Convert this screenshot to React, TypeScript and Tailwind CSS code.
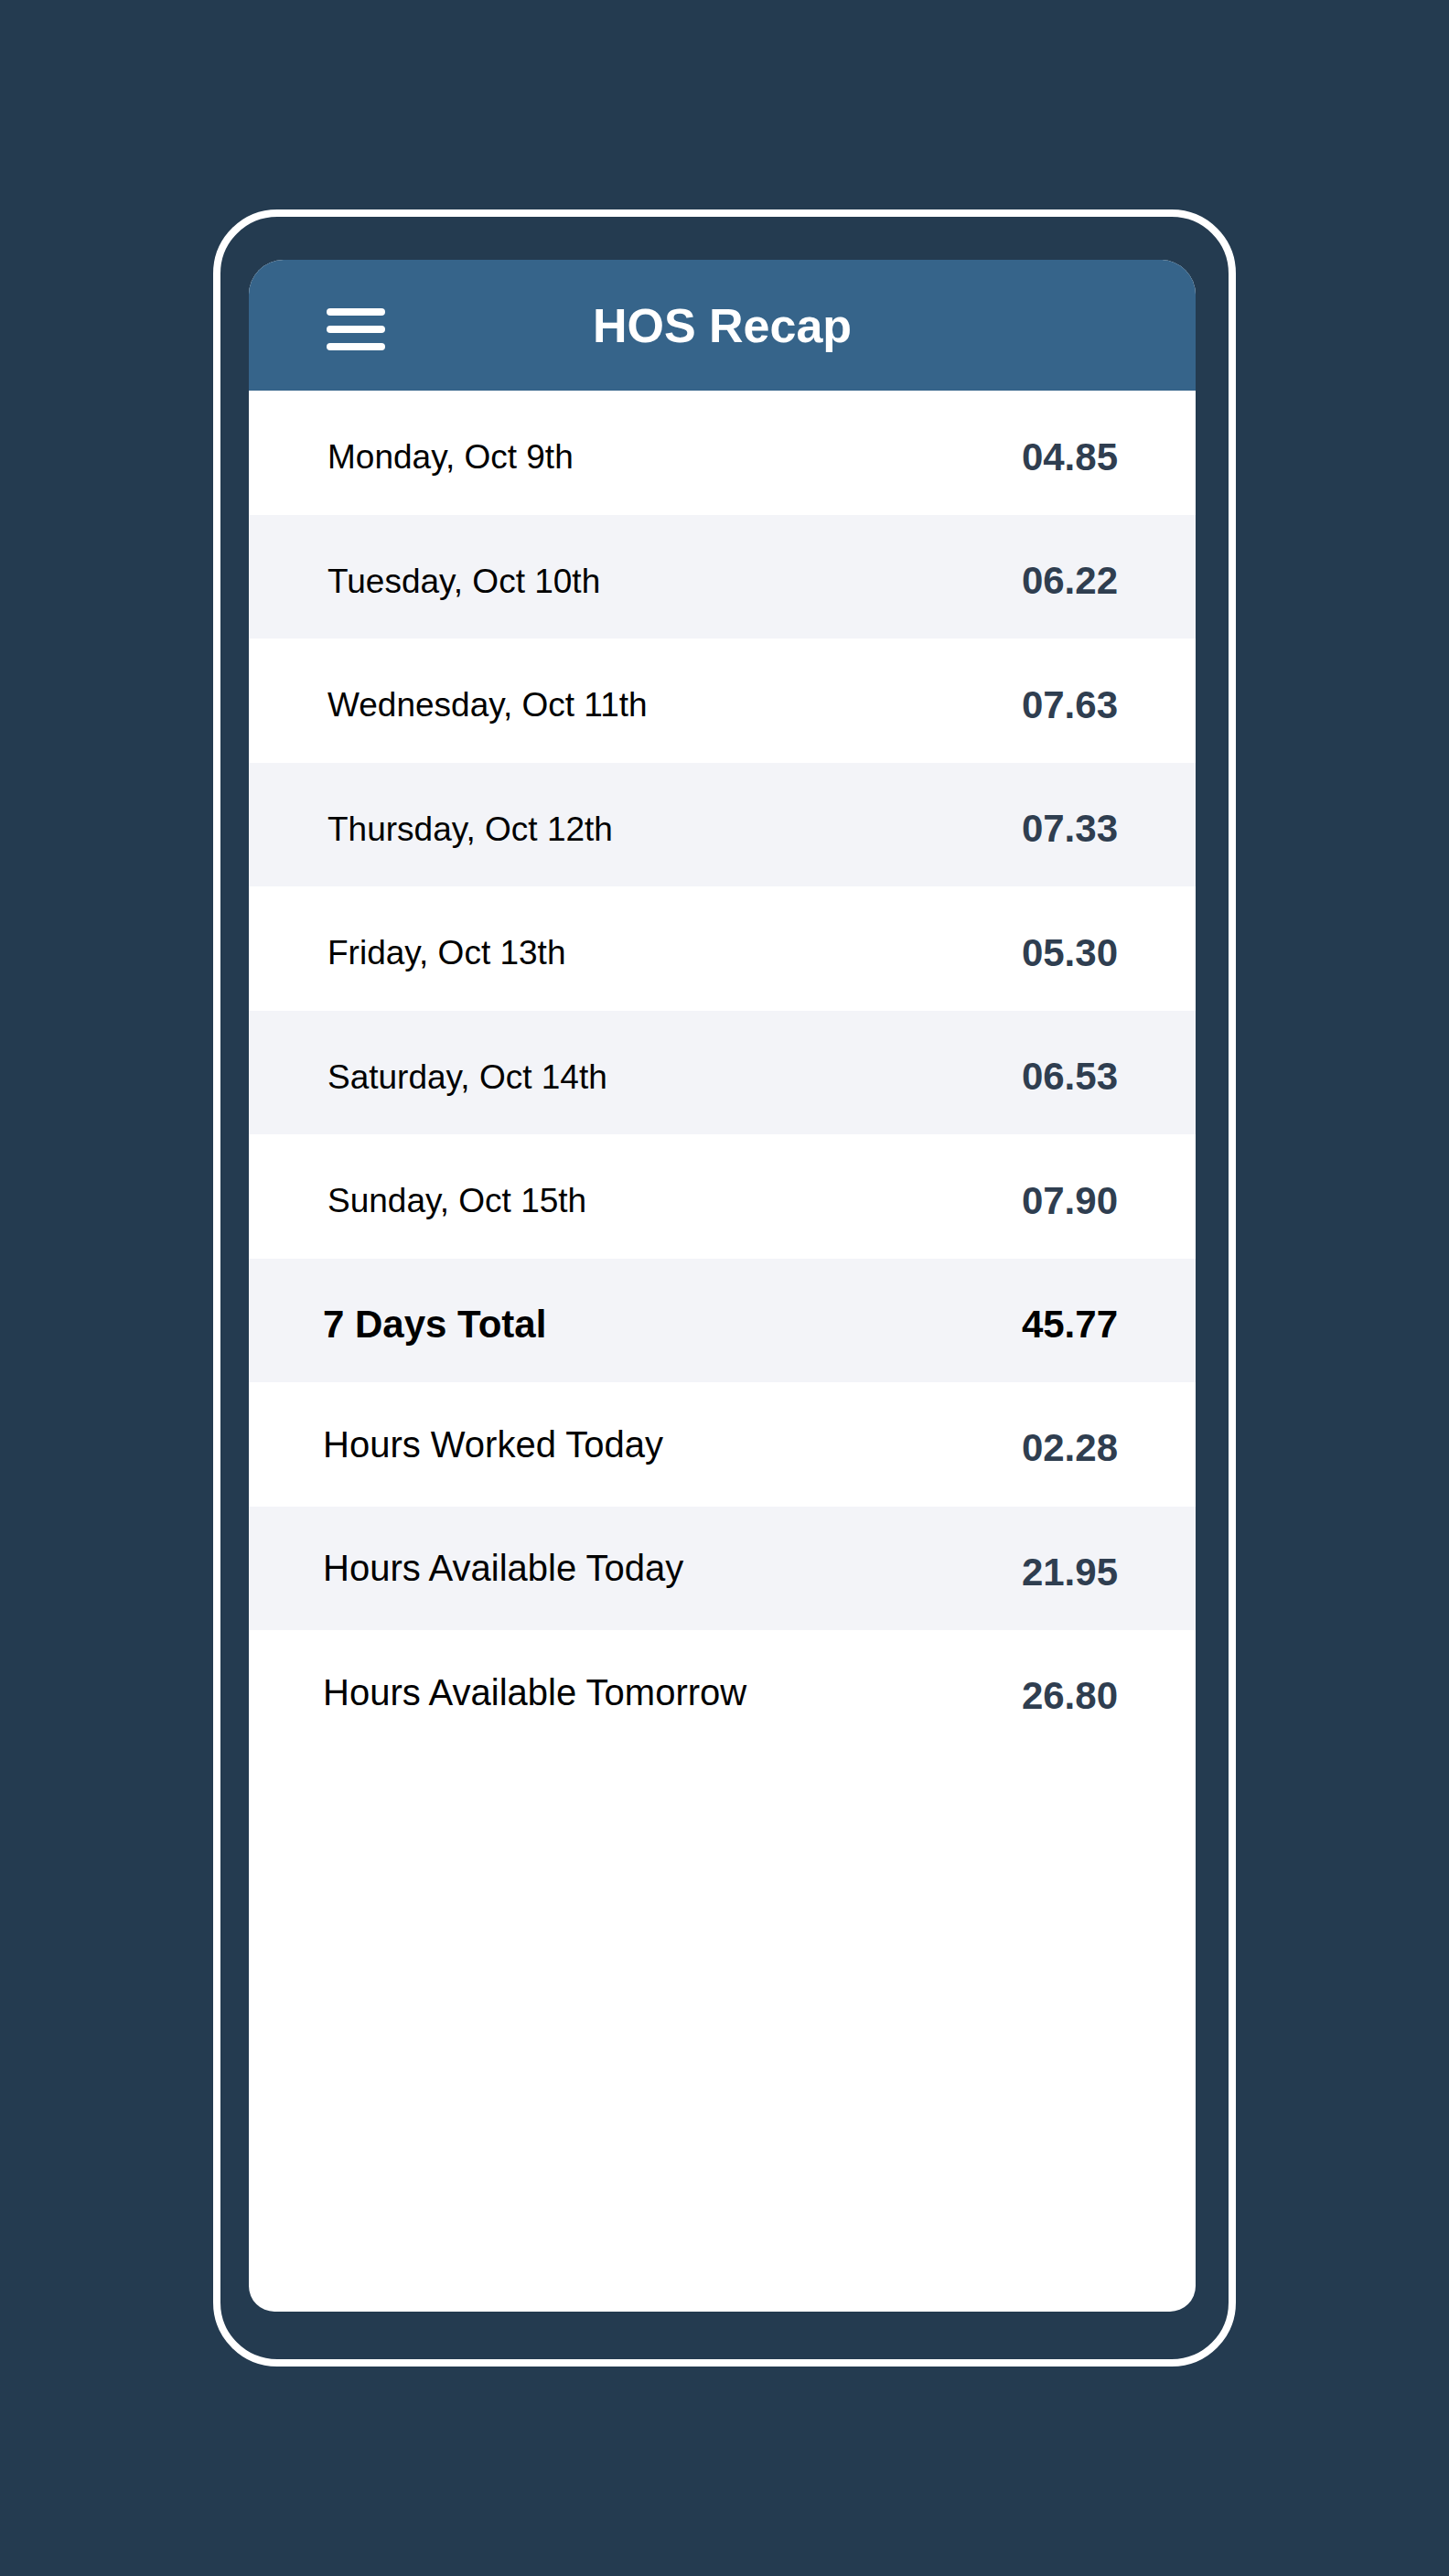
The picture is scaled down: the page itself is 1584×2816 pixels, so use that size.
const rows = [
  { label: "Monday, Oct 9th", value: "04.85", kind: "day" },
  { label: "Tuesday, Oct 10th", value: "06.22", kind: "day" },
  { label: "Wednesday, Oct 11th", value: "07.63", kind: "day" },
  { label: "Thursday, Oct 12th", value: "07.33", kind: "day" },
  { label: "Friday, Oct 13th", value: "05.30", kind: "day" },
  { label: "Saturday, Oct 14th", value: "06.53", kind: "day" },
  { label: "Sunday, Oct 15th", value: "07.90", kind: "day" },
  { label: "7 Days Total", value: "45.77", kind: "total" },
  { label: "Hours Worked Today", value: "02.28", kind: "hours" },
  { label: "Hours Available Today", value: "21.95", kind: "hours" },
  { label: "Hours Available Tomorrow", value: "26.80", kind: "hours" },
];

function Row({ label, value, kind, index }: { label: string; value: string; kind: string; index: number }) {
  const shaded = index % 2 === 1;
  return (
    <div
      className={`h-[135.5px] flex items-center justify-between pr-[85px] ${
        shaded ? "bg-[#f3f4f8]" : "bg-white"
      } ${kind === "day" ? "pl-[86px]" : "pl-[81px]"}`}
    >
      {kind === "total" ? (
        <span className="pt-[10px] text-[42px] leading-none font-bold text-black">{label}</span>
      ) : kind === "day" ? (
        <span className="pt-[10px] text-[37px] leading-none text-black">{label}</span>
      ) : (
        <span className="text-[40px] leading-none text-black">{label}</span>
      )}
      <span
        className={`text-[42px] leading-none font-bold ${
          kind === "total" ? "pt-[10px] text-black" : kind === "day" ? "pt-[10px] text-[#2f3e50]" : "pt-[9px] text-[#2f3e50]"
        }`}
      >
        {value}
      </span>
    </div>
  );
}

export default function App() {
  return (
    <div
      className="min-h-screen bg-[#243b50] flex justify-center pt-[229px]"
      style={{ fontFamily: '"Liberation Sans", Arial, sans-serif' }}
    >
      {/* Phone frame */}
      <div className="w-[1118px] h-[2358px] border-[8px] border-white rounded-[70px] pl-[31px] pr-[36px] pt-[47px] pb-[52px] flex">
        <div className="flex-1 bg-white rounded-t-[38px] rounded-b-[28px] overflow-hidden flex flex-col">
          {/* Header */}
          <div className="h-[143px] shrink-0 bg-[#36648a] grid grid-cols-[1fr_auto_1fr] items-center px-[85px]">
            <div className="mt-[8px] flex flex-col gap-[11px] w-[64px]">
              <span className="h-[8px] rounded-full bg-white" />
              <span className="h-[8px] rounded-full bg-white" />
              <span className="h-[8px] rounded-full bg-white" />
            </div>
            <h1 className="text-[52px] leading-none font-bold text-white">HOS Recap</h1>
            <div />
          </div>

          {/* Recap list */}
          <div className="flex flex-col">
            {rows.map((r, i) => (
              <Row key={r.label} label={r.label} value={r.value} kind={r.kind} index={i} />
            ))}
          </div>
        </div>
      </div>
    </div>
  );
}
